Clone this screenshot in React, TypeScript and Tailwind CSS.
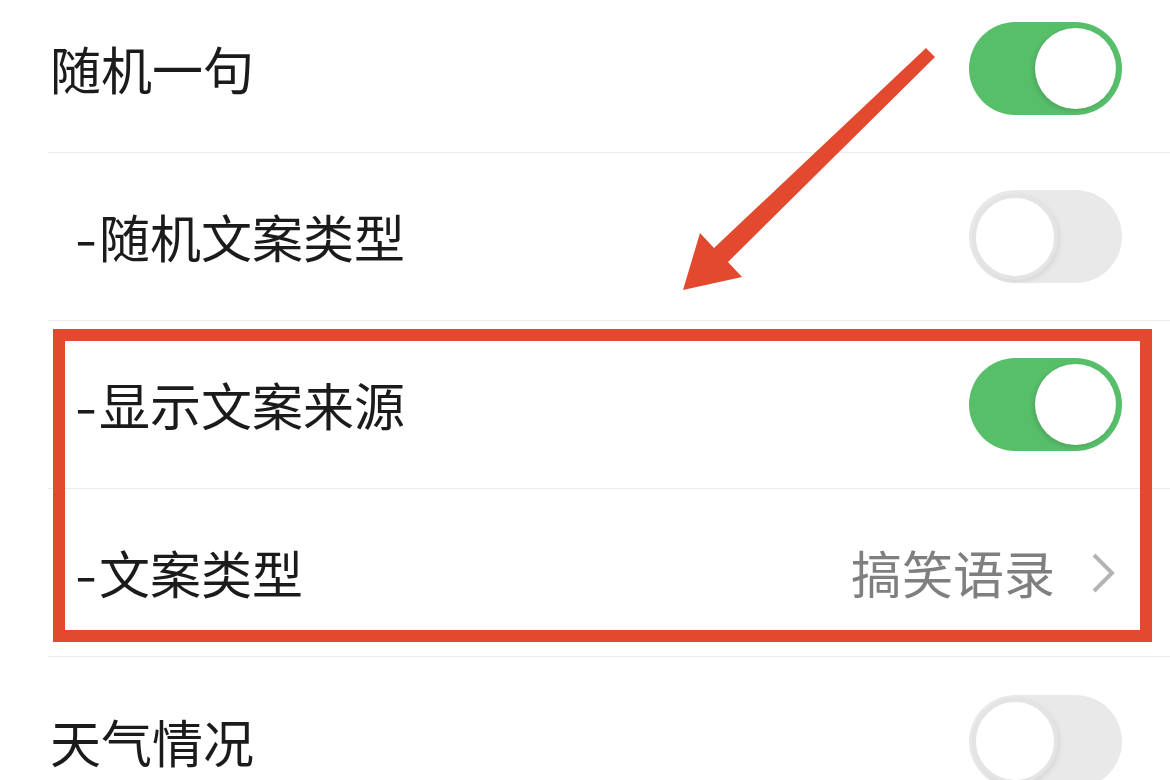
import React, { useState } from 'react';

const font = { fontFamily: '"Noto Sans CJK SC", "Noto Sans", sans-serif' };

function Toggle({ on }: { on: boolean }) {
  if (on) {
    return (
      <div className="w-[153px] h-[93px] rounded-full bg-[#57be6a] flex items-center justify-end pr-[6px] shrink-0">
        <div className="w-[81px] h-[81px] rounded-full bg-white shadow-[-2px_2px_4px_rgba(0,0,0,0.12)]" />
      </div>
    );
  }
  return (
    <div className="w-[153px] h-[93px] rounded-full bg-[#e9e9e9] flex items-center pl-[3px] shrink-0">
      <div className="w-[86px] h-[86px] rounded-full bg-white border-[4px] border-[#e4e4e4] shadow-[2px_2px_5px_rgba(0,0,0,0.08)]" />
    </div>
  );
}

function Row({ label, sub, children, last }: { label: string; sub?: boolean; children: React.ReactNode; last?: boolean }) {
  return (
    <div className="pl-[48px] h-[168px] shrink-0">
      <div className={`h-full flex items-center pr-[48px] ${last ? '' : 'border-b border-[#ebebeb]'}`}>
        <span className={`flex-1 flex items-center text-[51px] leading-none text-[#1b1b1b] ${sub ? 'pl-[27px]' : 'pl-[2px]'}`}>
          {sub && (
            <span className="inline-block w-[24px]">
              <span className="inline-block scale-x-[1.25] origin-left">-</span>
            </span>
          )}
          {label}
        </span>
        {children}
      </div>
    </div>
  );
}

export default function App() {
  const [rows] = useState([
    { label: '随机一句', sub: false, on: true },
    { label: '随机文案类型', sub: true, on: false },
    { label: '显示文案来源', sub: true, on: true },
  ]);

  return (
    <div className="relative w-[1170px] h-[780px] overflow-hidden bg-white" style={font}>
      <div className="flex flex-col mt-[-15px]">
        {rows.map((r) => (
          <Row key={r.label} label={r.label} sub={r.sub}>
            <Toggle on={r.on} />
          </Row>
        ))}
        <Row label="文案类型" sub>
          <div className="flex items-center pr-[7px]">
            <span className="text-[51px] leading-none text-[#7f7f7f]">搞笑语录</span>
            <svg width="24" height="40" viewBox="0 0 24 40" className="ml-[36px]">
              <path d="M3 2 L21 20 L3 38" fill="none" stroke="#b4b4b4" strokeWidth="4" />
            </svg>
          </div>
        </Row>
        <Row label="天气情况" last>
          <Toggle on={false} />
        </Row>
      </div>

      {/* annotation overlay */}
      <div className="absolute left-[53px] top-[329px] w-[1099px] h-[313px] border-[12px] border-[#e2492f]" />
      <svg className="absolute left-0 top-0" width="1170" height="780" viewBox="0 0 1170 780">
        <polygon
          points="926,48 935,57 728,262 742,277 683,290 700,233 714,248"
          fill="#e2492f"
        />
      </svg>
    </div>
  );
}
